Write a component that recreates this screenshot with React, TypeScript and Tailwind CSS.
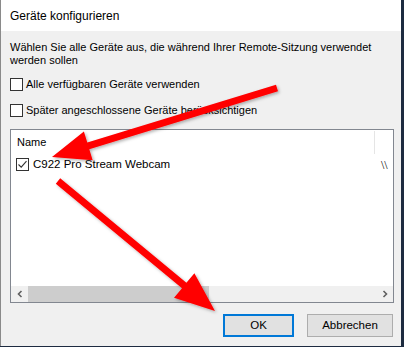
import React from "react";

function Box({ checked = false }: { checked?: boolean }) {
  return (
    <span className="flex h-[13px] w-[13px] shrink-0 items-center justify-center border border-[#333333] bg-white">
      {checked && (
        <svg width="11" height="11" viewBox="0 0 11 11">
          <path d="M1.5 5.5 L4.2 8.2 L9.5 2.2" fill="none" stroke="#333333" strokeWidth="1.1" />
        </svg>
      )}
    </span>
  );
}

function Arrows() {
  return (
    <svg className="pointer-events-none absolute inset-0" width="404" height="347" viewBox="0 0 404 347">
      <defs>
        <filter id="sh" x="-10%" y="-10%" width="120%" height="120%">
          <feDropShadow dx="1.5" dy="1.5" stdDeviation="1.5" floodColor="#000" floodOpacity="0.3" />
        </filter>
      </defs>
      <polygon
        filter="url(#sh)"
        fill="#ff0000"
        points="276,84.7 87.3,142.6 83.9,131.6 52,157 92.7,160.2 89.3,149.2 278,91.3"
      />
      <polygon
        filter="url(#sh)"
        fill="#ff0000"
        points="55.8,183.7 182,288.2 174,297.8 215,311 194.4,273.2 186.4,282.8 60.2,178.3"
      />
    </svg>
  );
}

export default function App() {
  return (
    <div
      className="relative h-[347px] w-[404px] overflow-hidden bg-[#1d2b40] text-[11px] text-black"
      style={{ fontFamily: '"Liberation Sans", Arial, sans-serif' }}
    >
      <div className="flex h-[346px] w-[401px] flex-col border-l border-[#8a8a8a] bg-[#f0f0f0]">
        <div className="flex h-[31px] items-center bg-white pl-[9px] text-[12px]">Geräte konfigurieren</div>
        <div className="flex flex-1 flex-col pl-[9px] pr-[8px]">
          <p className="mt-[10px] leading-[13px]">
            Wählen Sie alle Geräte aus, die während Ihrer Remote-Sitzung verwendet werden sollen
          </p>
          <label className="mt-[11px] flex items-center gap-[3px]">
            <Box />
            <span className="leading-[13px]">Alle verfügbaren Geräte verwenden</span>
          </label>
          <label className="mt-[13px] flex items-center gap-[3px]">
            <Box />
            <span className="leading-[13px]">Später angeschlossene Geräte berücksichtigen</span>
          </label>
          <div className="mt-[12px] flex h-[174px] w-[384px] flex-col border border-[#828790] bg-white">
            <div className="flex h-[25px] items-center">
              <span className="w-[363px] pl-[6px]">Name</span>
              <span className="h-[23px] w-px bg-[#e5e5e5]"></span>
            </div>
            <div className="mt-[2px] flex h-[15px] items-center pl-[5px]">
              <Box checked />
              <span className="ml-[4px] w-[348px] shrink-0 whitespace-nowrap text-[11.5px]">C922 Pro Stream Webcam</span>
              <span className="whitespace-nowrap text-[12px]" style={{ fontFamily: '"Liberation Serif", serif' }}>
                \\
              </span>
            </div>
            <div className="flex-1"></div>
            <div className="flex h-[16px] items-center bg-[#f0f0f0]">
              <span className="flex w-[17px] justify-center">
                <svg width="8" height="8" viewBox="0 0 8 8">
                  <path d="M5.5 1 L2.5 4 L5.5 7" fill="none" stroke="#606060" strokeWidth="1.6" />
                </svg>
              </span>
              <span className="h-[16px] w-[181px] bg-[#cdcdcd]"></span>
              <span className="flex-1"></span>
              <span className="flex w-[17px] justify-center">
                <svg width="8" height="8" viewBox="0 0 8 8">
                  <path d="M2.5 1 L5.5 4 L2.5 7" fill="none" stroke="#606060" strokeWidth="1.6" />
                </svg>
              </span>
            </div>
          </div>
          <div className="mt-[11px] flex justify-end gap-[13px] text-[11.5px]">
            <button className="flex h-[23px] w-[71px] items-center justify-center border-2 border-[#0078d7] bg-[#e1e1e1]">
              OK
            </button>
            <button className="flex h-[23px] w-[86px] items-center justify-center border border-[#adadad] bg-[#e1e1e1]">
              Abbrechen
            </button>
          </div>
        </div>
      </div>
      <Arrows />
    </div>
  );
}
